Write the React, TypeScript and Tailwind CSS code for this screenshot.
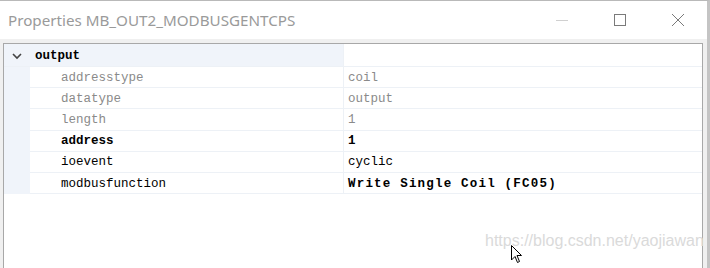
import React from 'react';

type Row = { name: string; value: string; tone: 'gray' | 'bold' | 'normal' | 'boldValue' };

const rows: Row[] = [
  { name: 'addresstype', value: 'coil', tone: 'gray' },
  { name: 'datatype', value: 'output', tone: 'gray' },
  { name: 'length', value: '1', tone: 'gray' },
  { name: 'address', value: '1', tone: 'bold' },
  { name: 'ioevent', value: 'cyclic', tone: 'normal' },
  { name: 'modbusfunction', value: 'Write Single Coil (FC05)', tone: 'boldValue' },
];

const mono = "font-['NSimSun','Liberation_Mono',monospace] text-[12.5px]";

const App: React.FC = () => {
  return (
    <div className="w-[710px] h-[268px] overflow-hidden flex flex-col bg-white border-t border-r-[3px] border-t-[#b9b9b9] border-r-[#c4c4c4]">
      {/* title bar */}
      <div className="h-[38px] flex items-center bg-white shrink-0">
        <span className="pl-[8px] text-[15.2px] text-[#9a9a9a] font-['Noto_Sans',sans-serif]">
          Properties MB_OUT2_MODBUSGENTCPS
        </span>
        <div className="ml-auto flex items-center h-full">
          <div className="w-[58px] h-full flex items-center justify-center">
            <div className="w-[12px] h-px bg-[#d0d0d0]" />
          </div>
          <div className="w-[58px] h-full flex items-center justify-center">
            <div className="w-[12px] h-[12px] border border-[#7a7a7a]" />
          </div>
          <div className="w-[58px] h-full flex items-center justify-center">
            <svg width="14" height="14" viewBox="0 0 14 14">
              <path d="M1 1 L13 13 M13 1 L1 13" stroke="#7a7a7a" strokeWidth="1" />
            </svg>
          </div>
        </div>
      </div>

      {/* body */}
      <div className="flex-1 bg-[#f0f0f0] pt-[4px] pl-[3px] pr-[4px] min-h-0">
        <div className="relative h-[240px] border border-[#a8a8a8] bg-white">
          {/* category row */}
          <div className="flex h-[23px] border-b border-[#edf1f6]">
            <div className="w-[339px] bg-[#f0f4fa] flex items-center pt-[2px]">
              <div className="w-[26px] flex items-center justify-center">
                <svg width="10" height="7" viewBox="0 0 10 7">
                  <path d="M1 1 L5 5 L9 1" fill="none" stroke="#444" strokeWidth="1.6" />
                </svg>
              </div>
              <span className={`${mono} font-bold text-black pl-[5px]`}>output</span>
            </div>
            <div className="flex-1 border-l border-[#edf1f6]" />
          </div>

          {rows.map(r => (
            <div key={r.name} className="flex h-[21.2px]">
              <div className="w-[26px] bg-[#f0f4fa]" />
              <div
                className={`w-[313px] flex items-center pt-[2px] pl-[31px] border-b border-[#edf1f6] ${mono} ${
                  r.tone === 'gray' ? 'text-[#8a8a8a]' : 'text-black'
                } ${r.tone === 'bold' ? 'font-bold' : ''}`}
              >
                {r.name}
              </div>
              <div
                className={`flex-1 flex items-center pt-[2px] pl-[4px] border-b border-l border-[#edf1f6] ${mono} ${
                  r.tone === 'gray' ? 'text-[#8a8a8a]' : 'text-black'
                } ${r.tone === 'bold' ? 'font-bold' : ''} ${
                  r.tone === 'boldValue' ? 'font-bold tracking-[1.2px]' : ''
                }`}
              >
                {r.value}
              </div>
            </div>
          ))}

          {/* watermark */}
          <div className="absolute left-[481px] top-[185px] text-[16px] text-[#dadada] font-['Liberation_Sans',sans-serif]">
            https://blog.csdn.net/yaojiawan
          </div>
          {/* cursor */}
          <svg className="absolute left-[507px] top-[201px]" width="12" height="19" viewBox="0 0 12 19">
            <path d="M0.5 0.5 L0.5 15 L4 11.5 L6.5 17.5 L8.5 16.5 L6 10.5 L10.5 10.5 Z" fill="#fff" stroke="#000" strokeWidth="1" />
          </svg>
        </div>
      </div>
    </div>
  );
};

export default App;
